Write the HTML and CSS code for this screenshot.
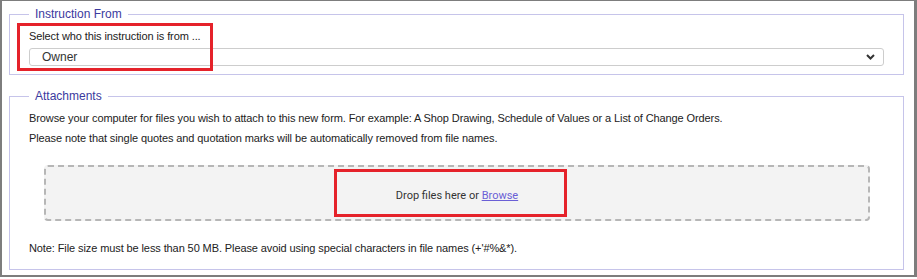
FILE: index.html
```html
<!DOCTYPE html>
<html>
<head>
<meta charset="utf-8">
<link rel="stylesheet" href="styles.css">
</head>
<body>
<div class="frame">
  <fieldset class="group group-from">
    <legend class="legend">Instruction From</legend>
    <div class="label">Select who this instruction is from ...</div>
    <div class="select">
      <span class="select-value">Owner</span>
      <svg class="chevron" width="9" height="6" viewBox="0 0 9 6"><path d="M1 1 L4.5 4.5 L8 1" fill="none" stroke="#333" stroke-width="2"/></svg>
    </div>
  </fieldset>
  <fieldset class="group group-attach">
    <legend class="legend">Attachments</legend>
    <p class="line">Browse your computer for files you wish to attach to this new form. For example: A Shop Drawing, Schedule of Values or a List of Change Orders.</p>
    <p class="line">Please note that single quotes and quotation marks will be automatically removed from file names.</p>
    <div class="dropzone">
      <span class="drop-text">Drop files here or <a class="browse" href="#">Browse</a></span>
    </div>
    <p class="line note">Note: File size must be less than 50 MB. Please avoid using special characters in file names (+'#%&amp;*).</p>
  </fieldset>
  <div class="mark mark-from"></div>
  <div class="mark mark-drop"></div>
</div>
</body>
</html>
```
FILE: styles.css
```css
html, body {
  margin: 0;
  padding: 0;
  background: #ffffff;
}

.frame {
  position: relative;
  width: 912px;
  border-top: 1px solid #7d7d7d;
  border-left: 2px solid #7d7d7d;
  border-right: 3px solid #7d7d7d;
  border-bottom: 2px solid #7d7d7d;
  padding: 6px 0 5px 0;
  font-family: "Liberation Sans", Arial, sans-serif;
  font-size: 12px;
  color: #222222;
}

.group {
  margin: 0 10px 0 7px;
  border: 1px solid #c6c4ea;
  padding: 8px 19px 8px 19px;
  min-width: 0;
}

.group-attach {
  margin-top: 14px;
  padding-top: 5px;
  padding-bottom: 11px;
}

.legend {
  margin-left: 0;
  padding: 0 6px;
  line-height: 14px;
  color: #3b3a9e;
  font-size: 12px;
}

.label {
  line-height: 14px;
  font-size: 11px;
  letter-spacing: -0.1px;
}

.select {
  margin-top: 5px;
  height: 16px;
  border: 1px solid #cdcdcd;
  border-radius: 3px;
  display: flex;
  align-items: center;
  justify-content: space-between;
  padding: 0 8px 0 12px;
  color: #333333;
}

.select-value {
  line-height: 16px;
}

.chevron {
  display: block;
}

.line {
  margin: 0;
  line-height: 20px;
  font-size: 11px;
  letter-spacing: -0.1px;
}

.dropzone {
  margin: 17px 14px 0 15px;
  height: 52px;
  border: 2px dashed #b6b6b6;
  border-radius: 4px;
  background: #f3f3f3;
  display: flex;
  align-items: center;
  justify-content: center;
}

.drop-text {
  font-family: Roboto, "Noto Sans", sans-serif;
  font-size: 11px;
  color: #333333;
  padding-top: 4px;
}

.browse {
  color: #6a5fd6;
  text-decoration: underline;
}

.note {
  margin-top: 17px;
}

.mark {
  position: absolute;
  border: 3px solid #e5222a;
  box-sizing: border-box;
}

.mark-from {
  left: 15px;
  top: 22px;
  width: 196px;
  height: 48px;
}

.mark-drop {
  left: 332px;
  top: 168px;
  width: 233px;
  height: 48px;
}
```
